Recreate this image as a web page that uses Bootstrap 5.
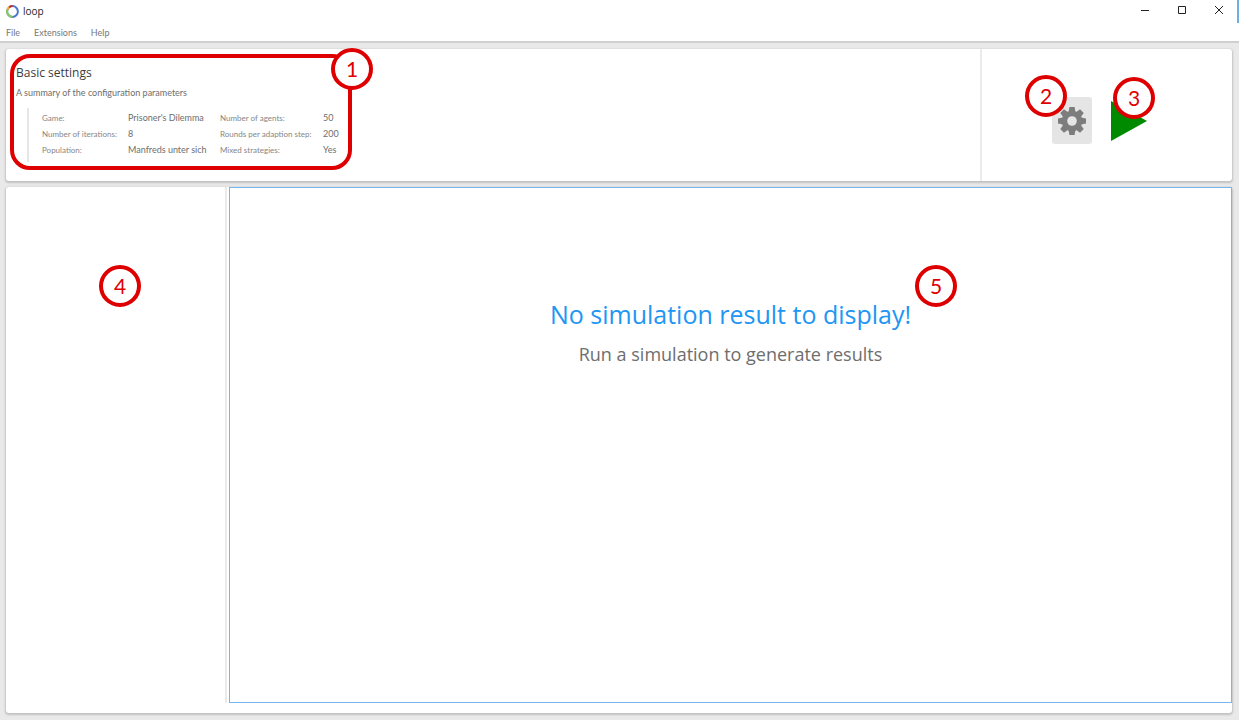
<!DOCTYPE html>
<html lang="en">
<head>
<meta charset="utf-8">
<meta name="viewport" content="width=device-width, initial-scale=1">
<title>loop</title>
<link rel="stylesheet" href="https://cdn.jsdelivr.net/npm/bootstrap@5.3.0/dist/css/bootstrap.min.css">
<style>
  body { font-family: "Open Sans", "Noto Sans", sans-serif; background: #e9e9e9; color: #6e6e6e; }
  .app-head { background: #fff; border-bottom: 2px solid #d0d0d0; }
  .title-bar { height: 23px; padding-left: 6px; border-right: 2px solid #6caee6; font-size: 10px; color: #222; }
  .win-btn { width: 37px; color: #222; }
  .menu-bar { height: 18px; gap: 14px; padding-left: 6px; font-size: 9px; line-height: 20px; }
  .menu-bar, .summary p, .params { font-family: Lato, "Open Sans", sans-serif; }
  .menu-bar a { color: #777; text-decoration: none; }
  .work { padding: 6px 7px 7px 6px; gap: 6px; }
  .panel { background: #fff; border-radius: 3px; box-shadow: 0 1px 2px 1px #c2c2c2; }
  .side-line { border-right: 2px solid #ebebeb; }
  .actions { width: 252px; border-left: 2px solid #ebebeb; padding: 11px 9px 0 0; gap: 13px; }
  .summary { width: 342px; margin: 5px 0 11px 4px; padding: 5px 2px 4px; border: 4px solid #de0000; border-radius: 20px; }
  .summary h1 { font-size: 12px; line-height: 20px; color: #3c3c3c; }
  .summary p { font-size: 9px; line-height: 20px; }
  .params { margin: 5px 0 0 11px; padding: 2px 0 4px 13px; border-left: 2px solid #e6e6e6; }
  .params table { font-size: 9px; line-height: 16px; table-layout: fixed; width: 298px; white-space: nowrap; }
  .params th { font-size: 8px; font-weight: 400; color: #868686; padding: 0; }
  .params td { padding: 0; }
  .w-a { width: 86px; } .w-b { width: 92px; } .w-c { width: 103px; }
  .callout { position: absolute; width: 42px; height: 42px; border: 4px solid #de0000; border-radius: 50%; background: #fff; color: #de0000; font: 21px/34px Lato, sans-serif; text-align: center; }
  .at-frame { right: -25px; top: -10px; }
  .at-gear { left: -27px; top: -22px; }
  .at-play { left: 8px; top: -20px; }
  .at-side { left: 93px; top: 78px; }
  .at-result { left: calc(100% + 4px); top: -29px; }
  .side { width: 221px; margin-bottom: 10px; }
  .gear-btn { width: 40px; height: 47px; border-radius: 3px; background: #e5e5e5; }
  .play-btn { width: 48px; height: 47px; }
  .result { margin: 0 0 10px 2px; padding-top: 106px; border: 1px solid #78b8ee; }
  .result h2 { font-size: 25px; line-height: 40px; color: #2196f3; }
  .result p { font-size: 18px; line-height: 40px; }
</style>
</head>
<body class="d-flex flex-column min-vh-100">
<header class="app-head">
  <div class="title-bar d-flex align-items-center">
    <svg width="13" height="13" viewBox="0 0 13 13" fill="none" stroke-width="2" aria-hidden="true">
      <circle cx="6.500" cy="6.500" r="5.400" stroke="#4a7ad0"/>
      <path d="M6.500 11.900A5.400 5.400 0 0 1 1.300 5" stroke="#8ccb4e"/>
      <path d="M1.300 5A5.400 5.400 0 0 1 3.200 2.200" stroke="#f4b41a"/>
      <path d="M3.200 2.200A5.400 5.400 0 0 1 6.500 1.100" stroke="#d92b2b"/>
    </svg>
    <span class="ms-1 me-auto">loop</span>
    <div class="d-flex align-self-start">
      <button type="button" class="win-btn btn px-0 py-1 border-0 d-flex align-items-center justify-content-center" aria-label="Minimize"><svg width="10" height="12" stroke="currentColor"><path d="M1 6.500H9"/></svg></button>
      <button type="button" class="win-btn btn px-0 py-1 border-0 d-flex align-items-center justify-content-center" aria-label="Maximize"><svg width="10" height="12" fill="none" stroke="currentColor"><path d="M1.500 2.500H8.500V9.500H1.500Z"/></svg></button>
      <button type="button" class="win-btn btn px-0 py-1 border-0 d-flex align-items-center justify-content-center" aria-label="Close"><svg width="10" height="12" stroke="currentColor"><path d="M1 2L9 10M9 2L1 10"/></svg></button>
    </div>
  </div>
  <nav class="menu-bar d-flex" aria-label="Main menu">
    <a href="#">File</a><a href="#">Extensions</a><a href="#">Help</a>
  </nav>
</header>
<main class="work d-flex flex-column flex-grow-1">
  <section class="panel d-flex">
    <div class="flex-grow-1">
      <div class="summary position-relative">
        <h1 class="m-0 fw-normal">Basic settings</h1>
        <p class="m-0">A summary of the configuration parameters</p>
        <div class="params">
          <table>
            <colgroup><col class="w-a"><col class="w-b"><col class="w-c"><col></colgroup>
            <tbody>
              <tr><th scope="row">Game:</th><td>Prisoner's Dilemma</td><th scope="row">Number of agents:</th><td>50</td></tr>
              <tr><th scope="row">Number of iterations:</th><td>8</td><th scope="row">Rounds per adaption step:</th><td>200</td></tr>
              <tr><th scope="row">Population:</th><td>Manfreds unter sich</td><th scope="row">Mixed strategies:</th><td>Yes</td></tr>
            </tbody>
          </table>
        </div>
        <span class="callout at-frame">1</span>
      </div>
    </div>
    <div class="actions d-flex align-items-center justify-content-center flex-shrink-0">
      <div class="position-relative">
        <button type="button" class="gear-btn btn border-0 p-0 d-flex align-items-center justify-content-center" aria-label="Settings">
          <svg width="28" height="28" viewBox="-14 -14 28 28" aria-hidden="true">
            <g fill="#7d7d7d">
              <path id="teeth" d="M-2.600 -14H2.600L3.400 -9H-3.400ZM-2.600 14H2.600L3.400 9H-3.400ZM-14 -2.600V2.600L-9 3.400V-3.400ZM14 -2.600V2.600L9 3.400V-3.400Z"/>
              <use href="#teeth" transform="rotate(45)"/>
              <circle r="10.300"/>
            </g>
            <circle r="4.800" fill="#e5e5e5"/>
          </svg>
        </button>
        <span class="callout at-gear">2</span>
      </div>
      <div class="position-relative">
        <button type="button" class="play-btn btn border-0 p-0 d-flex align-items-center justify-content-center" aria-label="Run simulation">
          <svg width="36" height="40" viewBox="0 0 36 40" aria-hidden="true"><path d="M0 0L36 20L0 40Z" fill="#008a00"/></svg>
        </button>
        <span class="callout at-play">3</span>
      </div>
    </div>
  </section>
  <section class="panel d-flex flex-grow-1">
    <aside class="side side-line position-relative flex-shrink-0" aria-label="Results list">
      <span class="callout at-side">4</span>
    </aside>
    <div class="result flex-grow-1 text-center">
      <h2 class="m-0 fw-normal"><span class="d-inline-block position-relative">No simulation result to display!<span class="callout at-result">5</span></span></h2>
      <p class="m-0">Run a simulation to generate results</p>
    </div>
  </section>
</main>
<script src="https://cdn.jsdelivr.net/npm/bootstrap@5.3.0/dist/js/bootstrap.bundle.min.js"></script>
</body>
</html>
